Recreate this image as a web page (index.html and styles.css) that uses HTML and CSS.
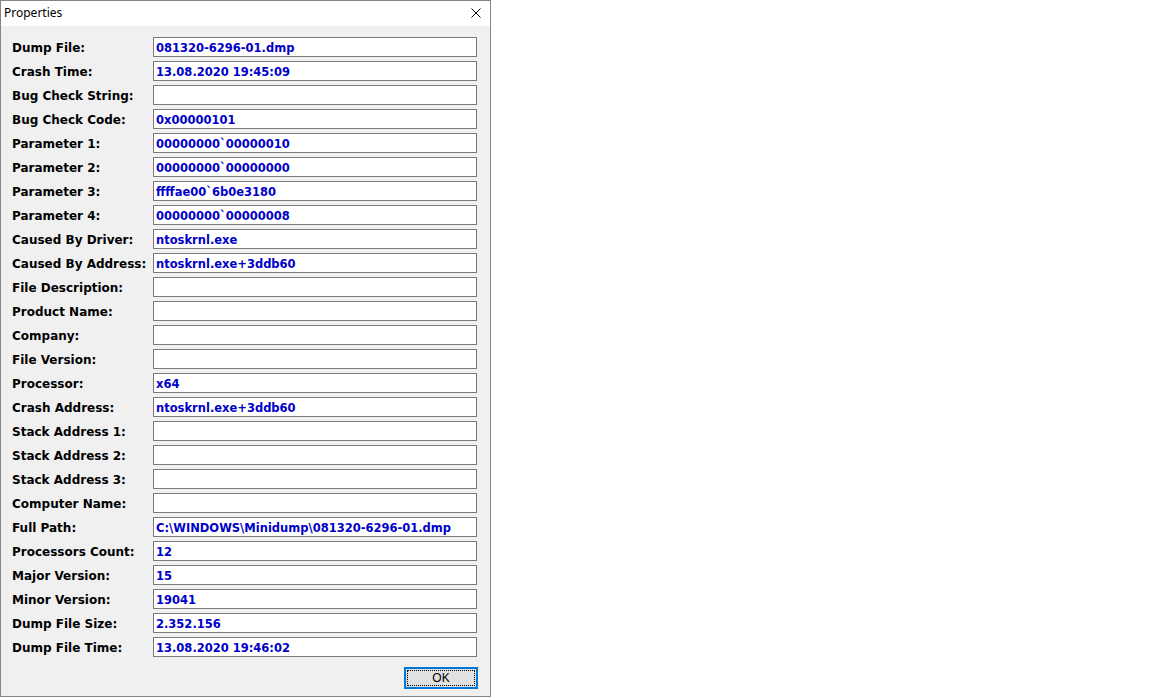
FILE: index.html
```html
<!DOCTYPE html>
<html>
<head>
<meta charset="utf-8">
<title>Properties</title>
<link rel="stylesheet" href="styles.css">
</head>
<body>
<div class="window">
  <div class="titlebar">
    <span class="title">Properties</span>
    <svg class="close" width="10" height="10" viewBox="0 0 10 10"><path d="M0.5 0.5 L9.5 9.5 M9.5 0.5 L0.5 9.5" stroke="#000" stroke-width="1" fill="none"/></svg>
  </div>
  <div class="content">
    <div class="grid">
      <div class="label">Dump File:</div><div class="field">081320-6296-01.dmp</div>
      <div class="label">Crash Time:</div><div class="field">13.08.2020 19:45:09</div>
      <div class="label">Bug Check String:</div><div class="field"></div>
      <div class="label">Bug Check Code:</div><div class="field">0x00000101</div>
      <div class="label">Parameter 1:</div><div class="field">00000000`00000010</div>
      <div class="label">Parameter 2:</div><div class="field">00000000`00000000</div>
      <div class="label">Parameter 3:</div><div class="field">ffffae00`6b0e3180</div>
      <div class="label">Parameter 4:</div><div class="field">00000000`00000008</div>
      <div class="label">Caused By Driver:</div><div class="field">ntoskrnl.exe</div>
      <div class="label">Caused By Address:</div><div class="field">ntoskrnl.exe+3ddb60</div>
      <div class="label">File Description:</div><div class="field"></div>
      <div class="label">Product Name:</div><div class="field"></div>
      <div class="label">Company:</div><div class="field"></div>
      <div class="label">File Version:</div><div class="field"></div>
      <div class="label">Processor:</div><div class="field">x64</div>
      <div class="label">Crash Address:</div><div class="field">ntoskrnl.exe+3ddb60</div>
      <div class="label">Stack Address 1:</div><div class="field"></div>
      <div class="label">Stack Address 2:</div><div class="field"></div>
      <div class="label">Stack Address 3:</div><div class="field"></div>
      <div class="label">Computer Name:</div><div class="field"></div>
      <div class="label">Full Path:</div><div class="field">C:\WINDOWS\Minidump\081320-6296-01.dmp</div>
      <div class="label">Processors Count:</div><div class="field">12</div>
      <div class="label">Major Version:</div><div class="field">15</div>
      <div class="label">Minor Version:</div><div class="field">19041</div>
      <div class="label">Dump File Size:</div><div class="field">2.352.156</div>
      <div class="label">Dump File Time:</div><div class="field">13.08.2020 19:46:02</div>
    </div>
    <div class="buttons">
      <button class="ok"><span class="focus">OK</span></button>
    </div>
  </div>
</div>
</body>
</html>
```

FILE: styles.css
```css
html, body {
  margin: 0;
  padding: 0;
  background: #ffffff;
}

.window {
  box-sizing: border-box;
  width: 491px;
  height: 697px;
  border: 1px solid #858585;
  display: flex;
  flex-direction: column;
  background: #f0f0f0;
}

.titlebar {
  height: 25px;
  background: #ffffff;
  display: flex;
  align-items: center;
  justify-content: space-between;
  padding: 0 9px 0 3px;
  flex: none;
}

.title {
  font-family: "Noto Sans", "Open Sans", sans-serif;
  font-size: 12px;
  color: #000;
  line-height: 16px;
  margin-top: -1px;
}

.close {
  display: block;
  margin-top: -1px;
}

.content {
  flex: 1;
  padding: 11px 12px 0 11px;
  display: flex;
  flex-direction: column;
}

.grid {
  display: grid;
  grid-template-columns: 141px 324px;
  grid-auto-rows: 20px;
  row-gap: 4px;
}

.label {
  font-family: "DejaVu Sans", sans-serif;
  font-weight: bold;
  font-size: 12px;
  color: #000;
  line-height: 20px;
  padding-top: 1px;
  white-space: nowrap;
}

.field {
  box-sizing: border-box;
  height: 20px;
  border: 1px solid #7a7a7a;
  background: #ffffff;
  font-family: "DejaVu Sans", sans-serif;
  font-weight: bold;
  font-size: 11.5px;
  color: #0000c8;
  line-height: 18px;
  padding: 1px 0 0 2px;
  white-space: nowrap;
  overflow: hidden;
}

.buttons {
  display: flex;
  justify-content: flex-end;
  margin-top: 10px;
}

.ok {
  box-sizing: border-box;
  width: 74px;
  height: 22px;
  border: 2px solid #0078d7;
  background: #e1e1e1;
  padding: 1px;
  margin: 0;
  display: flex;
}

.focus {
  flex: 1;
  border: 1px dotted #000;
  font-family: "Liberation Sans", sans-serif;
  font-size: 12px;
  color: #000;
  line-height: 14px;
  display: flex;
  align-items: center;
  justify-content: center;
}
```
